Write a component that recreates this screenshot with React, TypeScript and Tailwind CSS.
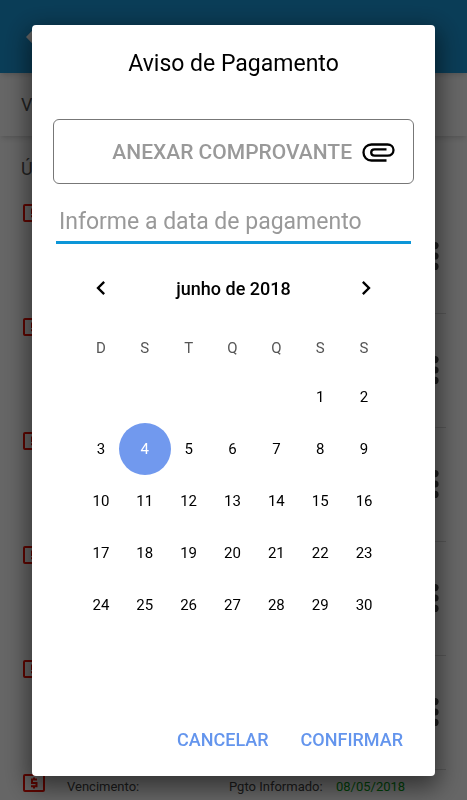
import { MdChevronLeft, MdChevronRight } from "react-icons/md";
import clsx from "clsx";

const WEEKDAYS = ["D", "S", "T", "Q", "Q", "S", "S"];
const FIRST_WEEKDAY = 5;
const DAYS = Array.from({ length: 30 }, (_, i) => i + 1);
const SELECTED_DAY = 4;

const PAYMENTS = [
  { id: 1 },
  { id: 2 },
  { id: 3 },
  { id: 4 },
  { id: 5 },
  { id: 6, informed: "08/05/2018" },
];

function BackIcon() {
  return (
    <svg viewBox="0 0 22 22" className="size-[22px] fill-white" aria-hidden="true">
      <path d="M22 9.300H6.500l5.500-5.500L9.500 1.300 0 11l9.500 9.700 2.500-2.500-5.500-5.500H22z" />
    </svg>
  );
}

function MoneyIcon() {
  return (
    <svg viewBox="0 0 22 18" className="h-[18px] w-[22px]" fill="none" stroke="#f00d00" aria-hidden="true">
      <rect x="1" y="1" width="20" height="16" rx="1" strokeWidth="2" />
      <path d="M14 5.500H9v3.400h4.500v3.300H8M11 3.500v2M11 12.500v2" strokeWidth="2" />
    </svg>
  );
}

function DotsIcon() {
  return (
    <svg viewBox="0 0 8 28" className="h-7 w-2 fill-[#484848]" aria-hidden="true">
      <circle cx="4" cy="3.600" r="3.600" />
      <circle cx="4" cy="14" r="3.600" />
      <circle cx="4" cy="24.400" r="3.600" />
    </svg>
  );
}

function ClipIcon() {
  return (
    <svg viewBox="0 0 33 19" className="h-[19px] w-[33px]" fill="none" stroke="#000" strokeWidth="2.300" aria-hidden="true">
      <path d="M24.500 17.500H9.500c-4.600 0-8-3.500-8-8s3.400-8 8-8h16c3.500 0 6 2.500 6 5.600s-2.500 5.600-6 5.600H12.600c-2 0-3.400-1.300-3.400-3.100s1.400-3.200 3.400-3.200H24.500" />
    </svg>
  );
}

function PaymentRow({ informed }: { informed?: string }) {
  return (
    <li className="relative mr-[21px] ml-[23px] flex h-[114px] justify-between pt-1 after:absolute after:right-0 after:bottom-0 after:left-11 after:h-px after:bg-[#dadada]">
      <div className="flex gap-[22px]">
        <MoneyIcon />
        {informed && (
          <div className="flex pt-[3px] text-[13px] leading-5 text-[#444]">
            <span className="w-[162px]">Vencimento:</span>
            <span className="w-[107px]">Pgto Informado:</span>
            <span className="text-[#00a010]">{informed}</span>
          </div>
        )}
      </div>
      <div className="-ml-4 flex items-center pr-[7px] pb-1.5">
        <DotsIcon />
      </div>
    </li>
  );
}

function Payments() {
  return (
    <div className="h-screen overflow-hidden bg-white">
      <header className="relative flex h-[73px] items-center bg-[#1b98d9] px-[26px] shadow-md">
        <BackIcon />
      </header>
      <div className="flex h-[63px] items-center px-[21px] text-[18px] text-[#555] shadow-md">V</div>
      <h2 className="flex h-16 items-center px-[21px] text-[18px] text-[#555]">Ú</h2>
      <ul>
        {PAYMENTS.map((payment) => (
          <PaymentRow key={payment.id} informed={payment.informed} />
        ))}
      </ul>
    </div>
  );
}

function Calendar() {
  return (
    <section className="pr-[49px] pl-[47px]">
      <div className="flex h-12 items-center justify-between pr-1.5 pl-2">
        <button type="button" aria-label="Mês anterior">
          <MdChevronLeft className="size-7" />
        </button>
        <span className="text-[18px] font-medium">junho de 2018</span>
        <button type="button" aria-label="Próximo mês">
          <MdChevronRight className="size-7" />
        </button>
      </div>
      <div className="mt-6 grid h-6 grid-cols-7 items-center text-center text-[15px] text-[#555]">
        {WEEKDAYS.map((day, i) => (
          <span key={i}>{day}</span>
        ))}
      </div>
      <div className="mt-[11px] grid grid-cols-7">
        {DAYS.map((day) => (
          <button
            key={day}
            type="button"
            aria-pressed={day === SELECTED_DAY}
            className={clsx(
              "relative isolate h-13 text-[15px]",
              day === SELECTED_DAY &&
                "text-white before:absolute before:-inset-x-1 before:inset-y-0 before:-z-10 before:rounded-full before:bg-[#7199ee]",
            )}
            style={day === 1 ? { gridColumnStart: FIRST_WEEKDAY + 1 } : undefined}
          >
            {day}
          </button>
        ))}
      </div>
    </section>
  );
}

function PaymentDialog() {
  return (
    <div className="fixed inset-0 bg-black/60 px-8 pt-[25px] pb-6">
      <div
        role="dialog"
        aria-labelledby="dialog-title"
        className="flex h-full flex-col rounded-sm bg-white text-black shadow-[0_8px_24px_4px_rgba(0,0,0,0.5)]"
      >
        <h1 id="dialog-title" className="pt-[23px] text-center text-[23px] leading-8">
          Aviso de Pagamento
        </h1>
        <button
          type="button"
          className="mx-[21px] mt-[39px] flex h-[65px] items-center justify-end gap-2.5 rounded-md border border-[#777] pt-0.5 pr-[18px] text-[21px] font-medium text-[#999]"
        >
          ANEXAR COMPROVANTE
          <ClipIcon />
        </button>
        <input
          type="text"
          aria-label="Data de pagamento"
          placeholder="Informe a data de pagamento"
          className="mx-6 mt-4 h-11 border-b-3 border-[#0c96d8] px-[3px] pt-0.5 text-[23px] outline-none placeholder:text-[#999]"
        />
        <div className="mt-5">
          <Calendar />
        </div>
        <div className="mt-auto flex justify-end gap-8 pr-8 pb-[22px] text-[18px] leading-7 font-medium text-[#6495ed]">
          <button type="button">CANCELAR</button>
          <button type="button">CONFIRMAR</button>
        </div>
      </div>
    </div>
  );
}

export default function App() {
  return (
    <main className="font-['Roboto',sans-serif]">
      <Payments />
      <PaymentDialog />
    </main>
  );
}
